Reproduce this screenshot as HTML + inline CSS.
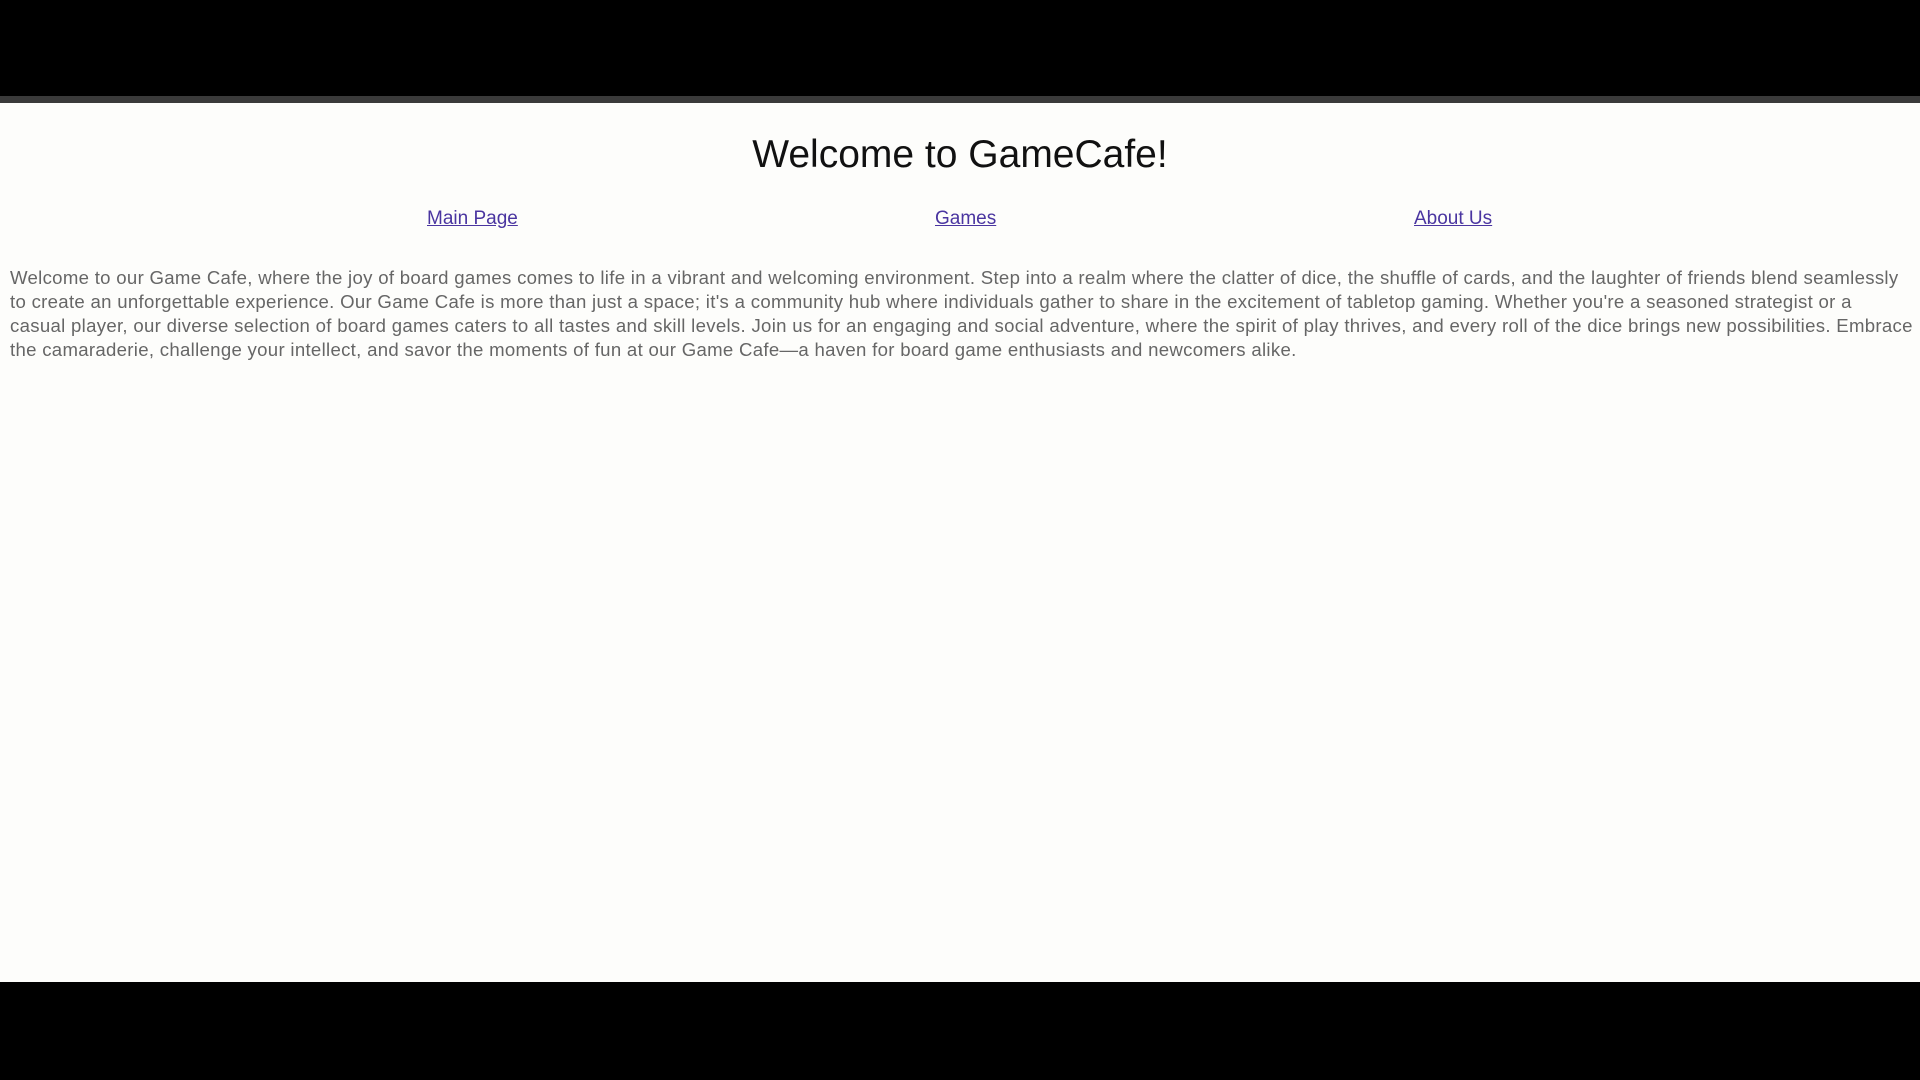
<!DOCTYPE html>
<html><head><meta charset="utf-8"><style>
html,body{margin:0;padding:0;width:1920px;height:1080px;overflow:hidden;background:#000;font-family:"Liberation Sans",sans-serif}
#top{position:absolute;left:0;top:0;width:1920px;height:96px;background:#000}
#bar{position:absolute;left:0;top:96px;width:1920px;height:7px;background:#3a3a3a}
#page{position:absolute;left:0;top:103px;width:1920px;height:879px;background:#fdfdfb;overflow:hidden}
h1{position:absolute;left:0;width:1920px;top:28px;margin:0;text-align:center;font-weight:normal;font-size:39px;color:#111;line-height:48px}
a{position:absolute;top:104px;font-size:19px;color:#4a35a0;text-decoration:underline;line-height:24px}
p{position:absolute;left:10px;top:163px;width:1905px;margin:0;font-size:18.6px;letter-spacing:0.3px;line-height:24px;color:#666;white-space:nowrap}
#bot{position:absolute;left:0;top:982px;width:1920px;height:98px;background:#000}
</style></head><body>
<div id="top"></div><div id="bar"></div>
<div id="page">
<h1>Welcome to GameCafe!</h1>
<a style="left:427px">Main Page</a>
<a style="left:935px">Games</a>
<a style="left:1414px">About Us</a>
<p>Welcome to our Game Cafe, where the joy of board games comes to life in a vibrant and welcoming environment. Step into a realm where the clatter of dice, the shuffle of cards, and the laughter of friends blend seamlessly<br>to create an unforgettable experience. Our Game Cafe is more than just a space; it's a community hub where individuals gather to share in the excitement of tabletop gaming. Whether you're a seasoned strategist or a<br>casual player, our diverse selection of board games caters to all tastes and skill levels. Join us for an engaging and social adventure, where the spirit of play thrives, and every roll of the dice brings new possibilities. Embrace<br>the camaraderie, challenge your intellect, and savor the moments of fun at our Game Cafe—a haven for board game enthusiasts and newcomers alike.</p>
</div>
<div id="bot"></div>
</body></html>
